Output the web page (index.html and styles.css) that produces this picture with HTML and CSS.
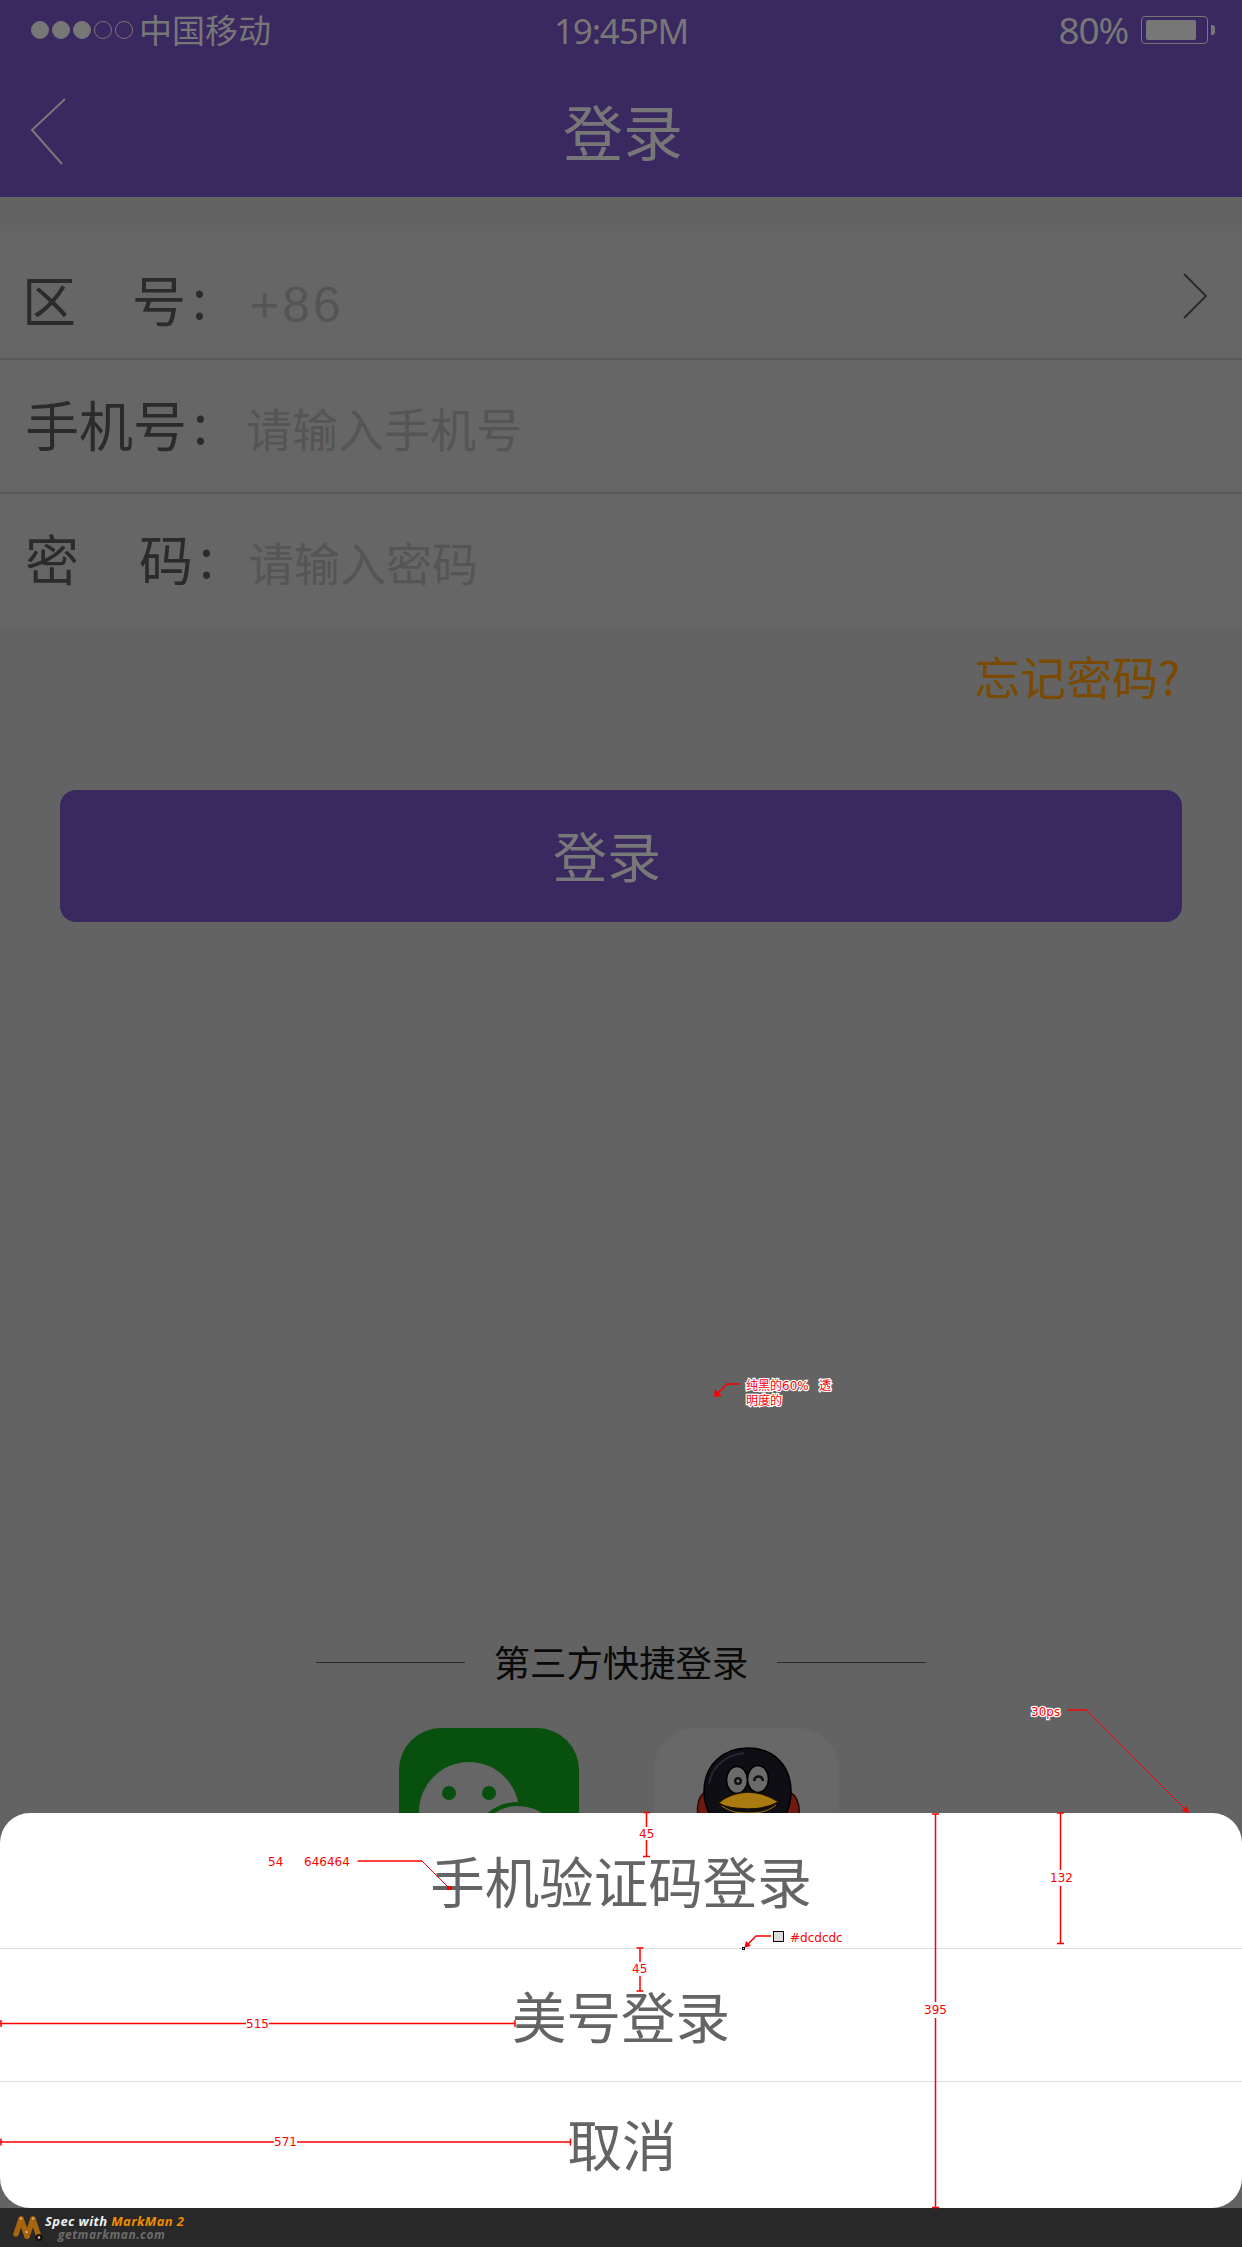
FILE: index.html
```html
<!DOCTYPE html>
<html lang="zh-CN">
<head>
    <meta charset="UTF-8">
    <meta name="viewport" content="width=device-width, initial-scale=1.0">
    <title>登录</title>
    <link rel="stylesheet" href="styles.css">
</head>
<body>
<div class="page">
    <div class="content">
        <header class="top-bar">
            <div class="status-bar">
                <div class="carrier">
                    <span class="signal"><i class="on"></i><i class="on"></i><i class="on"></i><i></i><i></i></span>
                    <span>中国移动</span>
                </div>
                <div class="clock">19:45PM</div>
                <div class="power">
                    <span>80%</span>
                    <span class="battery"><i class="battery-fill"></i></span>
                    <i class="battery-nub"></i>
                </div>
            </div>
            <div class="nav-bar">
                <svg class="back-icon" width="37" height="67" viewBox="0 0 37 67"><path d="M35 1 L2 32 L32 66"/></svg>
                <h1 class="nav-title">登录</h1>
            </div>
        </header>

        <form class="login-form">
            <div class="row row-first">
                <span class="label">区<i class="gap gap-first"></i>号<i class="colon">:</i></span>
                <span class="code">+86</span>
                <svg class="next-icon" width="25" height="46" viewBox="0 0 25 46"><path d="M1 1 L23 23 L1 45"/></svg>
            </div>
            <div class="row">
                <span class="label">手机号<i class="colon">:</i></span>
                <span class="hint">请输入手机号</span>
            </div>
            <div class="row row-last">
                <span class="label">密<i class="gap gap-wide"></i>码<i class="colon">:</i></span>
                <span class="hint hint-pwd">请输入密码</span>
            </div>
        </form>

        <div class="forgot">忘记密码?</div>
        <div class="login-btn">登录</div>

        <div class="third-title">
            <i class="rule"></i>
            <span>第三方快捷登录</span>
            <i class="rule"></i>
        </div>
        <div class="third-icons">
            <div class="tile tile-wechat">
                <svg width="180" height="180" viewBox="0 0 180 180">
                    <ellipse class="bubble" cx="70" cy="84" rx="50" ry="50"/>
                    <circle class="bubble-eye" cx="50" cy="65" r="7"/>
                    <circle class="bubble-eye" cx="90" cy="65" r="7"/>
                    <ellipse class="bubble bubble-ring" cx="119" cy="116" rx="43" ry="40"/>
                </svg>
            </div>
            <div class="tile tile-qq">
                <svg width="185" height="185" viewBox="0 0 185 185">
                    <path class="qq-scarf" d="M52 64 C42 68 42 84 46 100 L143 100 C147 84 146 70 136 64 Z"/>
                    <path class="qq-head" d="M50 64 C50 36 70 20 94 20 C118 20 137 36 137 64 C137 76 134 84 128 94 L60 94 C54 84 50 76 50 64 Z"/>
                    <path class="qq-shine" d="M55 56 C58 38 72 27 90 25"/>
                    <ellipse class="qq-eye" cx="83" cy="52" rx="10.5" ry="13.5"/>
                    <ellipse class="qq-eye" cx="104" cy="51" rx="10.5" ry="13.5"/>
                    <circle class="qq-pupil" cx="84" cy="53" r="4"/>
                    <circle class="qq-glint" cx="84" cy="53" r="1.5"/>
                    <path class="qq-wink" d="M100 53 C101 47 108 47 109 53"/>
                    <path class="qq-beak" d="M64 75 C72 68 84 64 94 64 C104 64 116 68 125 74 C116 79 104 81 94 81 C84 81 72 80 64 75 Z"/>
                    <path class="qq-smile" d="M68 78 C78 85 86 85 94 85 C102 85 112 85 122 77"/>
                </svg>
            </div>
        </div>

        <div class="sheet">
            <div class="sheet-row sheet-row-first">手机验证码登录</div>
            <div class="sheet-row sheet-row-mid">美号登录</div>
            <div class="sheet-row sheet-row-last">取消</div>
        </div>
    </div>

    <footer class="spec-bar">
        <svg class="spec-logo" width="32" height="28" viewBox="0 0 32 28">
            <path class="spec-m" d="M4 20 L9 5"/>
            <path class="spec-m" d="M9 5 L15 22"/>
            <path class="spec-m" d="M15 22 L21 5"/>
            <path class="spec-m" d="M21 5 L27 23"/>
            <circle class="spec-dot" cx="9" cy="4.5" r="1"/>
            <circle class="spec-dot" cx="21" cy="4.5" r="1"/>
            <circle class="spec-dot" cx="14.5" cy="18" r="1"/>
            <circle class="spec-eye" cx="27" cy="23.5" r="3.6"/>
            <circle class="spec-dot" cx="27" cy="23.5" r="1.2"/>
        </svg>
        <div class="spec-text">
            <div class="spec-line">Spec with <span class="spec-orange">MarkMan 2</span></div>
            <div class="spec-site">getmarkman.com</div>
        </div>
    </footer>

    <!-- red measure marks from the spec tool -->
    <svg class="marks" width="1242" height="2247" viewBox="0 0 1242 2247">
        <g class="thin">
            <path d="M422 1861 L449 1888"/>
            <path d="M1086.5 1710 L1187 1811"/>
        </g>
        <g class="thick">
            <path d="M740 1384 L727 1384 L716 1395"/>
            <path d="M357.5 1861 L422 1861"/>
            <path d="M1067 1710 L1086.5 1710"/>
            <path d="M771 1936 L756 1936 L746 1946"/>
            <path d="M0 2023.5 L246 2023.5 M269 2023.5 L515 2023.5 M1 2020 V2027 M515 2020 V2027"/>
            <path d="M0 2142 L274 2142 M297 2142 L570.5 2142 M1 2138.5 V2145.5 M570.5 2138.5 V2145.5"/>
            <path d="M646.5 1812 V1827 M646.5 1840 V1856.5 M643 1812.5 H650 M643 1856.5 H650"/>
            <path d="M640 1948 V1962 M640 1976 V1991 M636.5 1948 H643.5 M636.5 1991 H643.5"/>
            <path d="M1060.5 1813 V1870 M1060.5 1886 V1943.5 M1057 1813 H1064 M1057 1943.5 H1064"/>
            <path d="M935.5 1814 V2002 M935.5 2018 V2207 M932 1814 H939 M932 2207.5 H939"/>
        </g>
        <path class="head" d="M714 1397 L715 1389 L722 1396 Z"/>
        <path class="head" d="M744.5 1947.5 L746 1941 L751 1946 Z"/>
        <path class="head" d="M1189 1813 L1182 1811 L1187 1806 Z"/>
        <rect class="head" x="447" y="1886" width="5" height="4"/>
        <rect class="swatch" x="773.5" y="1931.5" width="10" height="10"/>
        <rect class="probe" x="742.5" y="1947.5" width="2" height="2"/>
        <text class="mark-text halo" x="746" y="1390">纯黑的60%</text>
        <text class="mark-text halo" x="819" y="1390">透</text>
        <text class="mark-text halo" x="746" y="1405">明度的</text>
        <text class="mark-text halo" x="1031" y="1716">30ps</text>
        <text class="mark-text" x="268" y="1866">54</text>
        <text class="mark-text" x="304" y="1866">646464</text>
        <text class="mark-text" x="246" y="2028">515</text>
        <text class="mark-text" x="274" y="2146">571</text>
        <text class="mark-text" x="639" y="1838">45</text>
        <text class="mark-text" x="632" y="1973">45</text>
        <text class="mark-text" x="1050" y="1882">132</text>
        <text class="mark-text" x="924" y="2014">395</text>
        <text class="mark-text" x="790" y="1942">#dcdcdc</text>
    </svg>
</div>
</body>
</html>
```

FILE: styles.css
```css
* {
    box-sizing: border-box;
}
html, body {
    margin: 0;
    padding: 0;
}
body {
    width: 1242px;
    height: 2247px;
    overflow: hidden;
    background: #636363;
    font-family: "Noto Sans CJK SC", "Noto Sans", sans-serif;
}
.page {
    position: relative;
    display: flex;
    flex-direction: column;
    width: 1242px;
    height: 2247px;
}
.content {
    position: relative;
    height: 2208px;
    overflow: hidden;
}

/* top */
.top-bar {
    height: 197px;
    background: #3a2860;
    color: #777;
}
.status-bar {
    display: grid;
    grid-template-columns: 1fr auto 1fr;
    align-items: center;
    height: 60px;
    padding: 0 27px 0 31px;
}
.carrier {
    display: flex;
    align-items: center;
    gap: 6px;
    font-size: 33px;
    line-height: 40px;
    margin-top: -3px;
}
.signal {
    display: flex;
    gap: 3px;
    margin-top: 3px;
}
.signal i {
    width: 18px;
    height: 18px;
    border: 1px solid #777;
    border-radius: 50%;
}
.signal i.on {
    background: #777;
}
.clock {
    font-family: "Noto Sans", sans-serif;
    font-size: 35px;
    line-height: 40px;
    letter-spacing: -1.2px;
    padding-top: 2px;
    margin-right: 4px;
}
.power {
    display: flex;
    align-items: center;
    justify-content: flex-end;
    font-family: "Noto Sans", sans-serif;
    font-size: 37px;
    line-height: 40px;
    letter-spacing: -1.2px;
}
.battery {
    display: block;
    width: 67px;
    height: 28px;
    margin-left: 13px;
    padding: 3px 11px 3px 4px;
    border: 1px solid #777;
    border-radius: 4px;
}
.battery-fill {
    display: block;
    height: 100%;
    background: #777;
    border-radius: 2px;
}
.battery-nub {
    display: block;
    width: 4px;
    height: 10px;
    margin-left: 3px;
    background: #777;
    border-radius: 0 3px 3px 0;
}
.nav-bar {
    display: grid;
    grid-template-columns: 60px 1fr 60px;
    align-items: center;
    height: 137px;
    padding: 3px 26px 0 30px;
}
.back-icon {
    margin-top: 2px;
}
.back-icon path {
    fill: none;
    stroke: #777;
    stroke-width: 2;
}
.nav-title {
    margin: 0;
    font-size: 60px;
    font-weight: 400;
    line-height: 70px;
    text-align: center;
}

/* form */
.login-form {
    margin-top: 34px;
    background: #666;
}
.row {
    display: flex;
    align-items: center;
    height: 134px;
    padding-left: 25px;
    border-bottom: 2px solid #595959;
}
.row-first {
    height: 129px;
    padding-top: 14px;
}
.row-last {
    border-bottom: none;
    height: 132px;
}
.label {
    display: flex;
    align-items: center;
    width: 222px;
    font-size: 54px;
    line-height: 64px;
    color: #2b2b2b;
    margin-bottom: 5px;
}
.row-first .label {
    margin-left: -3px;
    margin-right: 3px;
}
.colon {
    margin-left: 6px;
    font-style: normal;
    margin-top: -6px;
}
.gap {
    width: 54px;
}
.gap-first {
    width: 56px;
}
.gap-wide {
    width: 60px;
}
.hint {
    font-size: 46px;
    line-height: 56px;
    color: #555;
    margin-top: 2px;
    margin-left: -1px;
}
.hint-pwd {
    margin-left: 1px;
}
.code {
    font-family: "Liberation Sans", sans-serif;
    font-size: 50px;
    letter-spacing: 3px;
    line-height: 56px;
    color: #555;
    margin-top: 6px;
    margin-left: 3px;
}
.next-icon {
    margin-left: auto;
    margin-right: 34px;
    margin-bottom: 12px;
}
.next-icon path {
    fill: none;
    stroke: #2b2b2b;
    stroke-width: 2;
}
.forgot {
    margin-top: 22px;
    padding-right: 62px;
    text-align: right;
    font-size: 46px;
    line-height: 54px;
    color: #7a4a00;
}
.login-btn {
    height: 132px;
    margin: 88px 60px 0;
    padding-right: 28px;
    background: #3a2860;
    border-radius: 16px;
    color: #787878;
    font-size: 54px;
    line-height: 130px;
    text-align: center;
}

/* third party */
.third-title {
    display: flex;
    align-items: center;
    justify-content: center;
    gap: 29px;
    margin-top: 714px;
    font-size: 36.4px;
    line-height: 50px;
    color: #0a0a0a;
}
.rule {
    width: 149px;
    height: 1px;
    background: #2a2a2a;
    margin-top: 2px;
}
.third-icons {
    display: flex;
    justify-content: center;
    gap: 75px;
    margin-top: 42px;
    padding-right: 4px;
}
.tile {
    overflow: hidden;
    border-radius: 42px;
}
.tile svg {
    display: block;
}
.tile-wechat {
    width: 180px;
    height: 180px;
    background: #08500e;
}
.tile-qq {
    width: 185px;
    height: 185px;
    background: #686868;
}
.bubble {
    fill: #666;
}
.bubble-ring {
    stroke: #08500e;
    stroke-width: 4;
}
.bubble-eye {
    fill: #08500e;
}
.qq-head {
    fill: #0e0e14;
    stroke: #000;
    stroke-width: 1.5;
}
.qq-shine {
    fill: none;
    stroke: #262633;
    stroke-width: 2;
}
.qq-scarf {
    fill: #6e1a10;
    stroke: #2a0805;
    stroke-width: 1.5;
}
.qq-eye {
    fill: #6b6b6b;
    stroke: #000;
    stroke-width: 1.5;
}
.qq-pupil {
    fill: #111;
}
.qq-glint {
    fill: #777;
}
.qq-wink {
    fill: none;
    stroke: #111;
    stroke-width: 2.5;
}
.qq-beak {
    fill: #a87a10;
    stroke: #1a1000;
    stroke-width: 1.5;
}
.qq-smile {
    fill: none;
    stroke: #a87a10;
    stroke-width: 1;
}

/* bottom sheet */
.sheet {
    position: absolute;
    left: 0;
    right: 0;
    bottom: 0;
    height: 395px;
    background: #fff;
    border-radius: 30px;
    color: #646464;
    font-size: 54.5px;
    text-align: center;
}
.sheet-row {
    display: flex;
    align-items: center;
    justify-content: center;
    height: 133px;
    padding-bottom: 2px;
    border-bottom: 1px solid #dcdcdc;
}
.sheet-row-first {
    height: 136px;
}
.sheet-row-last {
    height: 126px;
    border-bottom: none;
    margin-top: -2px;
    padding-left: 2px;
}

/* spec tool footer */
.spec-bar {
    display: flex;
    align-items: flex-start;
    height: 39px;
    padding: 6px 0 0 12px;
    background: #282828;
}
.spec-m {
    fill: none;
    stroke: #a8650f;
    stroke-width: 5.5;
    stroke-linecap: round;
}
.spec-dot {
    fill: #e8d0a0;
}
.spec-eye {
    fill: #111;
}
.spec-text {
    margin-left: 1px;
    font-family: "Open Sans", sans-serif;
    font-style: italic;
    font-weight: 700;
}
.spec-line {
    font-size: 13px;
    line-height: 14px;
    letter-spacing: 0.4px;
    color: #f0f0f0;
    white-space: pre;
}
.spec-orange {
    color: #f08c00;
}
.spec-site {
    margin: 0 0 0 13px;
    font-size: 12px;
    line-height: 14px;
    letter-spacing: 0.5px;
    color: #6c6c6c;
}

/* measure marks */
.marks {
    position: absolute;
    left: 0;
    top: 0;
    pointer-events: none;
}
.marks path, .marks rect {
    fill: none;
}
.thin path {
    stroke: #f00;
    stroke-width: 1;
}
.thick path {
    stroke: #f00;
    stroke-width: 1.5;
}
.marks .head {
    fill: #f00;
}
.marks .swatch {
    fill: #dcdcdc;
    stroke: #000;
    stroke-width: 1;
}
.marks .probe {
    stroke: #000;
    stroke-width: 1;
}
.mark-text {
    font-family: "DejaVu Sans", "Noto Sans CJK SC", sans-serif;
    font-size: 12px;
    fill: #f00;
}
.halo {
    paint-order: stroke;
    stroke: #fff;
    stroke-width: 2.5px;
}
```
